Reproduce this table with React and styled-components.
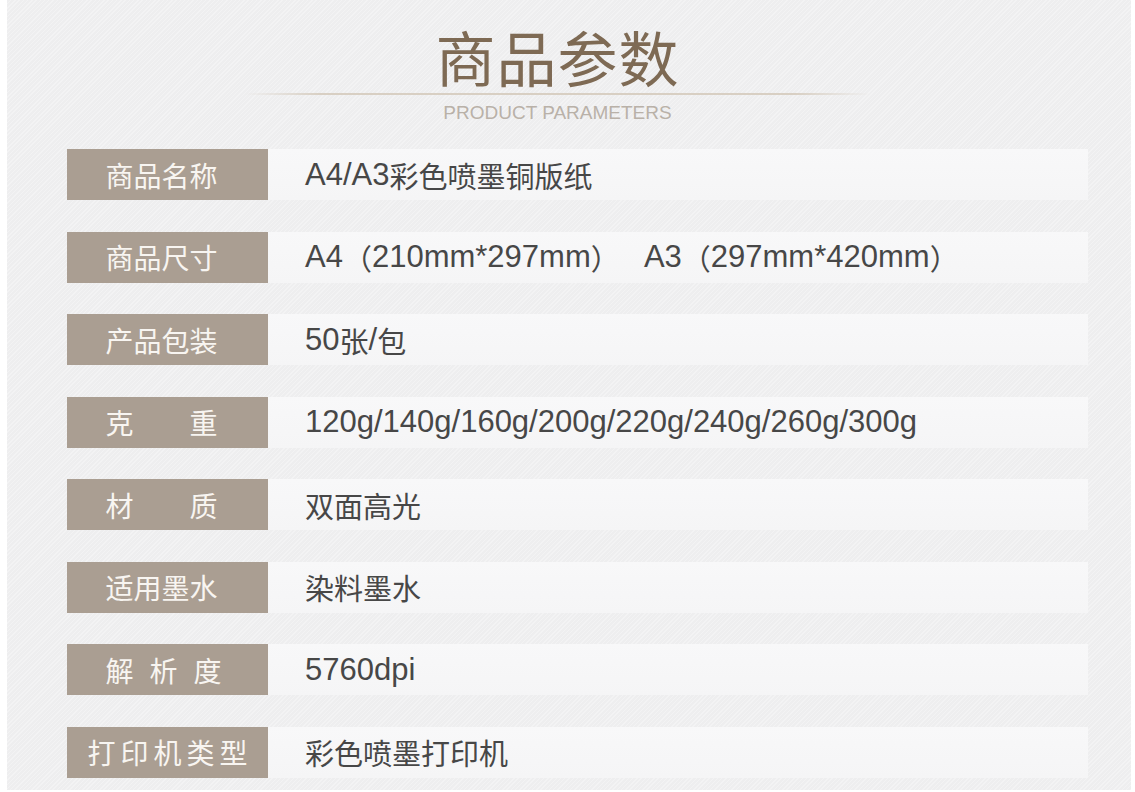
import styled, { createGlobalStyle } from "styled-components";

const GlobalStyle = createGlobalStyle`
  html, body {
    margin: 0;
    padding: 0;
    background: #ffffff;
  }
`;

const Page = styled.div`
  width: 1135px;
  height: 792px;
  padding: 0 4px 2px 7px;
  box-sizing: border-box;
  background: #ffffff;
  font-family: "Liberation Sans", "Noto Sans CJK SC", sans-serif;
`;

const Panel = styled.div`
  height: 790px;
  overflow: hidden;
  background-color: #eeeeef;
  background-image: repeating-linear-gradient(
    -45deg,
    rgba(255, 255, 255, 0.3) 0px,
    rgba(255, 255, 255, 0.3) 1px,
    rgba(0, 0, 0, 0) 1px,
    rgba(0, 0, 0, 0) 3px
  );
`;

const Header = styled.div`
  width: 625px;
  margin-left: 238px;
  padding-top: 26px;
  text-align: center;
`;

const Title = styled.h1`
  margin: 0;
  font-family: "Noto Sans CJK SC", sans-serif;
  font-size: 60px;
  line-height: 1;
  font-weight: 400;
  color: #7e6a54;
  letter-spacing: 1px;
`;

const Divider = styled.div`
  height: 2px;
  margin-top: 7px;
  background: linear-gradient(
    to right,
    rgba(214, 204, 190, 0) 0%,
    #d8cfc3 12%,
    #d8cfc3 88%,
    rgba(214, 204, 190, 0) 100%
  );
`;

const Subtitle = styled.div`
  margin-top: 8px;
  font-family: "Liberation Sans", sans-serif;
  font-size: 19px;
  line-height: 1;
  color: #b9b1a8;
`;

const List = styled.div`
  display: flex;
  flex-direction: column;
  gap: 31.5px;
  margin-top: 27px;
  padding-left: 60px;
`;

const Row = styled.div`
  display: grid;
  grid-template-columns: 201px 820px;
  height: 51px;
`;

const Label = styled.div`
  display: flex;
  align-items: center;
  justify-content: center;
  padding-left: ${(p) => p.$left || 0}px;
  padding-right: ${(p) => (p.$left ? 0 : 12)}px;
  background: #aa9e92;
  color: #f8f5f1;
  font-family: "Noto Sans CJK SC", sans-serif;
  font-size: 28px;
  letter-spacing: ${(p) => p.$spacing || 0}px;
  white-space: pre;
`;

const Value = styled.div`
  display: flex;
  align-items: center;
  padding-left: 37px;
  background: linear-gradient(to bottom, #f8f8f9, #f5f5f6);
  color: #474747;
  font-size: 31px;
  white-space: pre;
`;

const Han = styled.span`
  font-family: "Noto Sans CJK SC", sans-serif;
  font-size: 29px;
`;

const params = [
  { label: "商品名称", value: "A4/A3彩色喷墨铜版纸" },
  { label: "商品尺寸", value: "A4（210mm*297mm）   A3（297mm*420mm）" },
  { label: "产品包装", value: "50张/包" },
  { label: "克\u3000\u3000重", value: "120g/140g/160g/200g/220g/240g/260g/300g" },
  { label: "材\u3000\u3000质", value: "双面高光" },
  { label: "适用墨水", value: "染料墨水" },
  { label: "解析度", value: "5760dpi", spacing: 16, left: 8 },
  { label: "打印机类型", value: "彩色喷墨打印机", spacing: 5, left: 5 },
];

// split into runs so latin and chinese text get their own sizes
const renderValue = (text) =>
  text
    .split(/([\u4e00-\u9fff\uff08\uff09]+)/)
    .filter(Boolean)
    .map((part, i) =>
      /[\u4e00-\u9fff\uff08\uff09]/.test(part) ? (
        <Han key={i}>{part}</Han>
      ) : (
        <span key={i}>{part}</span>
      )
    );

const App = () => {
  return (
    <Page>
      <GlobalStyle />
      <Panel>
        <Header>
          <Title>商品参数</Title>
          <Divider />
          <Subtitle>PRODUCT PARAMETERS</Subtitle>
        </Header>
        <List>
          {params.map((item) => (
            <Row key={item.label}>
              <Label $spacing={item.spacing} $left={item.left}>
                {item.label}
              </Label>
              <Value>{renderValue(item.value)}</Value>
            </Row>
          ))}
        </List>
      </Panel>
    </Page>
  );
};

export default App;
